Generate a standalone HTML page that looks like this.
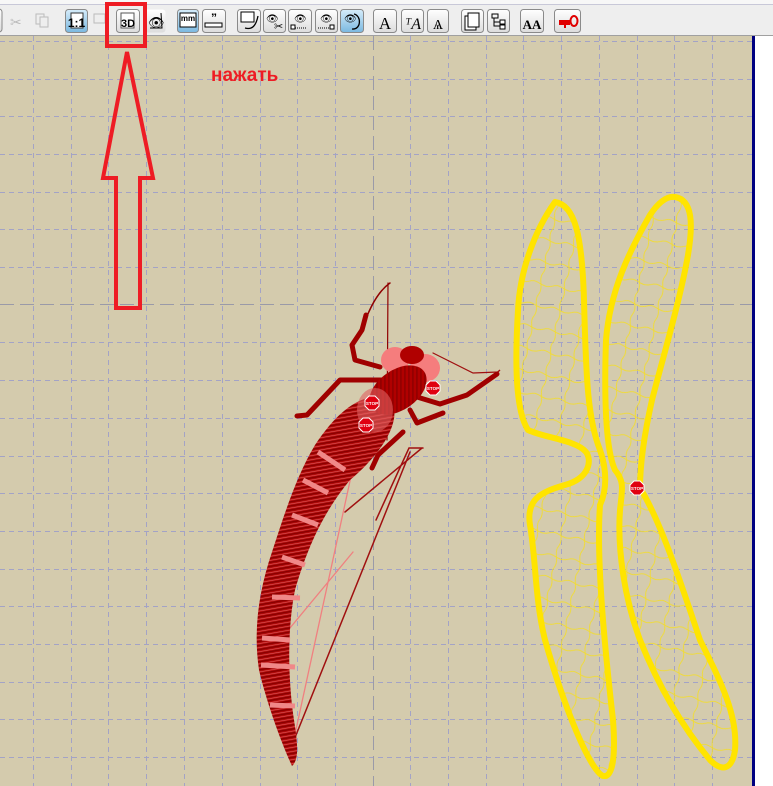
<!DOCTYPE html>
<html><head><meta charset="utf-8"><style>
html,body{margin:0;padding:0;width:773px;height:786px;overflow:hidden;background:#fff;font-family:"Liberation Sans",sans-serif}
svg{display:block}
</style></head><body>
<svg width="773" height="786" viewBox="0 0 773 786" xmlns="http://www.w3.org/2000/svg" font-family="Liberation Sans, sans-serif">
<defs>
<linearGradient id="bg" x1="0" y1="0" x2="0" y2="1"><stop offset="0" stop-color="#ffffff"/><stop offset="1" stop-color="#dcdcdc"/></linearGradient>
<linearGradient id="bb" x1="0" y1="0" x2="0" y2="1"><stop offset="0" stop-color="#d6ecfa"/><stop offset="1" stop-color="#7ab8e0"/></linearGradient>
<pattern id="hatch" width="4" height="4" patternUnits="userSpaceOnUse" patternTransform="rotate(35)"><rect width="4" height="4" fill="#b00000"/><rect width="1.3" height="4" fill="#8a0000"/></pattern>
<pattern id="hatch2" width="4" height="4" patternUnits="userSpaceOnUse" patternTransform="rotate(-10)"><rect width="4" height="4" fill="#b30a0a"/><rect width="4" height="1.4" fill="#880000"/><rect y="2.5" width="4" height="0.6" fill="#e06060"/></pattern>
<clipPath id="w1"><path d="M555,202 C575,205 582,235 584,300 C586,380 588,420 600,450 C607,470 607,490 600,505 C596,560 605,650 613,720 C616,760 612,778 603,776 C590,770 565,710 545,640 C535,600 536,560 530,525 C526,500 540,492 565,485 C590,478 592,460 586,452 C576,440 545,438 528,430 C515,410 515,360 518,310 C520,270 535,230 555,202Z"/></clipPath>
<clipPath id="w2"><path d="M675,197 C693,200 693,225 688,255 C680,300 665,350 652,400 C643,440 640,470 640,488 C660,520 680,580 700,640 C720,680 738,715 735,750 C732,770 722,772 710,760 C685,730 660,690 640,640 C625,600 617,550 620,510 C622,490 625,482 615,470 C606,450 604,400 606,340 C610,290 630,250 650,215 C660,200 668,196 675,197Z"/></clipPath>
<pattern id="mesh" width="24" height="22" patternUnits="userSpaceOnUse" patternTransform="rotate(12)"><path d="M0,11 C8,6 14,16 24,11 M12,0 C8,7 16,14 12,22" stroke="#f2dc30" stroke-width="0.9" fill="none"/></pattern>
<g id="stop"><polygon points="-3,-7 3,-7 7,-3 7,3 3,7 -3,7 -7,3 -7,-3" fill="#e00010" stroke="#fff" stroke-width="1"/><text x="0" y="1.8" font-size="4.5" fill="#fff" text-anchor="middle" font-weight="bold">STOP</text></g>
</defs>

<rect x="0" y="0" width="773" height="36" fill="#eeeeee"/>
<rect x="0" y="0" width="773" height="4" fill="#f7f7f7"/>
<line x1="0" y1="4.5" x2="773" y2="4.5" stroke="#c8c8d8"/>
<line x1="0" y1="35.5" x2="773" y2="35.5" stroke="#a0a0a0"/>
<rect x="-6" y="9" width="8" height="23" rx="3" fill="url(#bg)" stroke="#8a8a8a"/>
<text x="10" y="27" font-size="14" fill="#bbb">✂</text>
<rect x="36" y="14" width="8" height="10" fill="none" stroke="#bbb"/><rect x="40" y="17" width="8" height="10" fill="#eee" stroke="#bbb"/>
<g stroke="#8a8a8a">
<rect x="65.5" y="9.5" width="22" height="23" rx="3" fill="url(#bb)"/>
<rect x="116.5" y="9.5" width="23" height="23" rx="3" fill="url(#bg)"/>
<rect x="144.5" y="9.5" width="21" height="23" rx="3" fill="url(#bg)" stroke="none"/>
<rect x="177.5" y="9.5" width="21" height="23" rx="3" fill="url(#bb)"/>
<rect x="202.5" y="9.5" width="23" height="23" rx="3" fill="url(#bg)"/>
<rect x="237.5" y="9.5" width="23" height="23" rx="3" fill="url(#bg)"/>
<rect x="263.5" y="9.5" width="22" height="23" rx="3" fill="url(#bg)"/>
<rect x="288.5" y="9.5" width="23" height="23" rx="3" fill="url(#bg)"/>
<rect x="315.5" y="9.5" width="22" height="23" rx="3" fill="url(#bg)"/>
<rect x="340.5" y="9.5" width="23" height="23" rx="3" fill="url(#bb)"/>
<rect x="373.5" y="9.5" width="23" height="23" rx="3" fill="url(#bg)"/>
<rect x="401.5" y="9.5" width="22" height="23" rx="3" fill="url(#bg)"/>
<rect x="427.5" y="9.5" width="21" height="23" rx="3" fill="url(#bg)"/>
<rect x="461.5" y="9.5" width="22" height="23" rx="3" fill="url(#bg)"/>
<rect x="487.5" y="9.5" width="22" height="23" rx="3" fill="url(#bg)"/>
<rect x="520.5" y="9.5" width="23" height="23" rx="3" fill="url(#bg)"/>
<rect x="554.5" y="9.5" width="26" height="23" rx="3" fill="url(#bg)"/>
</g>
<rect x="71" y="13" width="12" height="15" fill="#fff" stroke="#333"/>
<text x="76.5" y="27" font-size="12" font-weight="bold" text-anchor="middle">1:1</text>
<rect x="94" y="14" width="11" height="9" fill="none" stroke="#bbb"/>
<rect x="121" y="13" width="13" height="15" fill="#fff" stroke="#555"/>
<text x="128" y="27" font-size="11" font-weight="bold" text-anchor="middle">3D</text>
<text x="148" y="27" font-size="13">👁</text><path d="M150,28 L162,28 L161,13" stroke="#000" fill="none"/>
<rect x="180" y="13" width="16" height="14" fill="#fff" stroke="#000"/><text x="188" y="21" font-size="8" font-weight="bold" text-anchor="middle">mm</text>
<text x="214" y="22" font-size="12" font-weight="bold" text-anchor="middle">”</text><rect x="205" y="23" width="17" height="4" fill="#fff" stroke="#000"/>
<rect x="241" y="12" width="13" height="10" fill="#fff" stroke="#000"/><path d="M245,28 C252,30 256,26 258,16" stroke="#000" fill="none" stroke-width="1.3"/>
<text x="266" y="22" font-size="10">👁</text><text x="274" y="30" font-size="11">✂</text>
<text x="294" y="22" font-size="10">👁</text><path d="M291,28 L307,28" stroke="#000" stroke-dasharray="1,1"/><rect x="291" y="25" width="4" height="4" fill="#fff" stroke="#000"/>
<text x="320" y="22" font-size="10">👁</text><path d="M318,28 L333,28" stroke="#000" stroke-dasharray="1,1"/><rect x="330" y="25" width="4" height="4" fill="#fff" stroke="#000"/>
<text x="344" y="22" font-size="10">👁</text><path d="M354,14 C362,16 361,30 352,29" stroke="#000" fill="none" stroke-width="1.3"/>
<text x="385" y="29" font-size="17" font-family="Liberation Serif" text-anchor="middle">A</text>
<text x="413" y="29" font-size="16" font-family="Liberation Serif" font-style="italic" text-anchor="middle">ᵀA</text>
<text x="438" y="29" font-size="14" font-family="Liberation Serif" text-anchor="middle">Ѧ</text>
<rect x="465" y="16" width="11" height="14" fill="#fff" stroke="#000"/><rect x="468" y="13" width="11" height="14" fill="#fff" stroke="#000"/>
<path d="M492,14 h6 v4 h-6z M494,18 v8 h6 M494,22 h6" stroke="#000" fill="none"/><rect x="500" y="20" width="5" height="4" fill="#fff" stroke="#000"/><rect x="500" y="25" width="5" height="4" fill="#fff" stroke="#000"/>
<text x="532" y="29" font-size="13" font-family="Liberation Serif" text-anchor="middle" font-weight="bold">AA</text>
<path d="M559,20 h11 v5 h-4 v3 h-2 v-3 h-5z" fill="#e00000"/><ellipse cx="574" cy="21" rx="3.5" ry="5" fill="none" stroke="#e00000" stroke-width="2"/>

<rect x="0" y="36" width="752" height="750" fill="#d4cbad"/>
<rect x="752" y="36" width="3" height="750" fill="#000080"/>
<g stroke="#a3a3c6" stroke-width="1" stroke-dasharray="5,4">
<path d="M33.5,36V786M71.5,36V786M108.5,36V786M146.5,36V786M184.5,36V786M222.5,36V786M260.5,36V786M297.5,36V786M335.5,36V786M410.5,36V786M448.5,36V786M486.5,36V786M523.5,36V786M561.5,36V786M599.5,36V786M637.5,36V786M674.5,36V786M712.5,36V786"/>
<path d="M0,41.5H752M0,79.5H752M0,116.5H752M0,154.5H752M0,192.5H752M0,229.5H752M0,267.5H752M0,342.5H752M0,380.5H752M0,418.5H752M0,456.5H752M0,493.5H752M0,531.5H752M0,569.5H752M0,606.5H752M0,644.5H752M0,682.5H752M0,719.5H752M0,757.5H752"/>
</g>
<g stroke="#9a9aa8" stroke-width="1" stroke-dasharray="14,6">
<path d="M373.5,36V786M0,304.5H752"/>
</g>

<g clip-path="url(#w1)"><rect x="480" y="170" width="170" height="640" fill="url(#mesh)"/></g>
<g clip-path="url(#w2)"><rect x="570" y="170" width="200" height="640" fill="url(#mesh)"/></g>
<g fill="none" stroke="#ffe400" stroke-width="6" stroke-linejoin="round">
<path d="M555,202 C575,205 582,235 584,300 C586,380 588,420 600,450 C607,470 607,490 600,505 C596,560 605,650 613,720 C616,760 612,778 603,776 C590,770 565,710 545,640 C535,600 536,560 530,525 C526,500 540,492 565,485 C590,478 592,460 586,452 C576,440 545,438 528,430 C515,410 515,360 518,310 C520,270 535,230 555,202Z"/>
<path d="M675,197 C693,200 693,225 688,255 C680,300 665,350 652,400 C643,440 640,470 640,488 C660,520 680,580 700,640 C720,680 738,715 735,750 C732,770 722,772 710,760 C685,730 660,690 640,640 C625,600 617,550 620,510 C622,490 625,482 615,470 C606,450 604,400 606,340 C610,290 630,250 650,215 C660,200 668,196 675,197Z"/>
</g>
<use href="#stop" x="637" y="488"/>

<g fill="none" stroke-linecap="round">
<path d="M422,448 L345,512 M376,520 L409,448 L423,448" stroke="#a01010" stroke-width="1.5"/>
<path d="M410,452 L290,750" stroke="#a01010" stroke-width="1.5"/>
<path d="M355,458 L292,748 M353,552 L280,640" stroke="#f08080" stroke-width="1.3"/>
<path d="M390,283 C380,290 370,305 362,330" stroke="#900000" stroke-width="1.5"/>
<path d="M433,353 L473,373 L498,372 L500,370 L470,395" stroke="#a01010" stroke-width="1.2"/>
<path d="M388,283 L387,440" stroke="#900000" stroke-width="1.2"/>
</g>
<path d="M390,398 C405,420 380,455 350,480 C325,510 308,545 295,590 C287,630 288,680 294,720 C298,745 299,760 292,766 C280,740 266,700 259,670 C253,630 259,590 272,552 C285,512 297,475 315,445 C335,415 360,390 390,398Z" fill="url(#hatch2)"/>
<g stroke="#f08888" stroke-width="5" fill="none">
<path d="M318,452 L345,470 M303,480 L328,493 M292,515 L318,525 M282,557 L305,565 M272,597 L300,598 M262,638 L290,640 M261,665 L295,667 M270,705 L295,706"/>
</g>
<g stroke="#a00000" stroke-width="5" fill="none" stroke-linejoin="round" stroke-linecap="round">
<path d="M380,367 L355,360 L352,345 L362,330 L366,315"/>
<path d="M385,380 L340,380 L307,415 L297,416"/>
<path d="M417,397 L440,404 L467,395 L497,374"/>
<path d="M410,410 L417,423 L443,413"/>
<path d="M403,432 L378,455 L372,468"/>
</g>
<ellipse cx="395" cy="360" rx="14" ry="13" fill="#f57d7d"/>
<ellipse cx="425" cy="368" rx="15" ry="14" fill="#f57d7d"/>
<ellipse cx="412" cy="355" rx="12" ry="9" fill="#b00000"/>
<ellipse cx="398" cy="390" rx="32" ry="20" transform="rotate(-35 398 390)" fill="url(#hatch)"/>
<ellipse cx="375" cy="410" rx="18" ry="22" fill="#e06060" opacity="0.6"/>
<use href="#stop" x="433" y="388"/>
<use href="#stop" x="372" y="403"/>
<use href="#stop" x="366" y="425"/>

<rect x="107" y="4" width="38" height="42" fill="none" stroke="#ee1c24" stroke-width="4"/>
<path d="M127,52 L153,178 L140,178 L140,308 L116,308 L116,178 L103,178 Z" fill="none" stroke="#ee1c24" stroke-width="4" stroke-linejoin="miter"/>
<text x="211" y="81" font-size="19" font-weight="bold" fill="#ee1c24">нажать</text>
</svg>
</body></html>
